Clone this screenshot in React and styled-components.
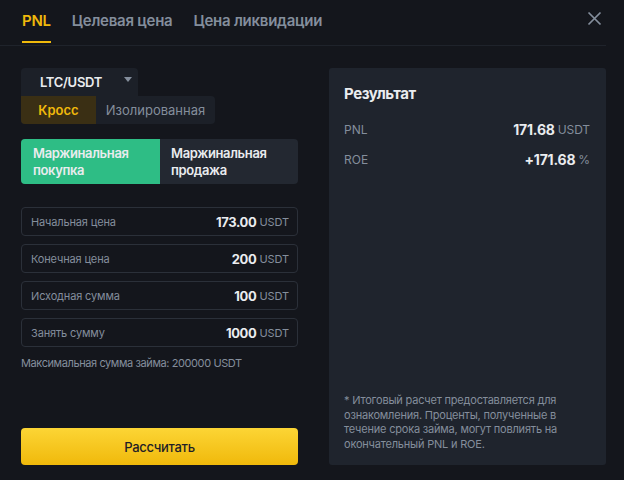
import React from 'react';
import styled, { createGlobalStyle } from 'styled-components';

const GlobalStyle = createGlobalStyle`
  html, body {
    margin: 0;
    padding: 0;
    background: #14161c;
  }

  * {
    box-sizing: border-box;
  }
`;

const Modal = styled.div`
  width: 624px;
  height: 480px;
  display: flex;
  flex-direction: column;
  background: #14161c;
  color: #eaecef;
  font-family: Inter, 'Noto Sans', sans-serif;
`;

const Head = styled.header`
  display: flex;
  align-items: stretch;
  height: 46px;
  margin-right: 18px;
  padding-left: 22px;
  border-bottom: 1px solid #1f232b;
`;

const Tabs = styled.nav`
  display: flex;
  gap: 21px;
`;

const Tab = styled.div`
  position: relative;
  display: flex;
  align-items: center;
  padding-bottom: 5px;
  font-size: 15px;
  font-weight: 600;
  letter-spacing: -0.25px;
  color: ${({ $active }) => ($active ? '#f0b90b' : '#848e9c')};

  &::after {
    content: '';
    display: ${({ $active }) => ($active ? 'block' : 'none')};
    position: absolute;
    left: 0;
    right: 0;
    bottom: 2px;
    height: 2px;
    background: #f0b90b;
  }
`;

const Close = styled.button`
  margin-left: auto;
  margin-right: 3px;
  align-self: flex-start;
  margin-top: 10px;
  padding: 0;
  width: 17px;
  height: 17px;
  border: 0;
  background: none;
  color: #848e9c;
  display: flex;
  align-items: center;
  justify-content: center;
`;

const Body = styled.div`
  flex: 1;
  display: grid;
  grid-template-columns: 277px 277px;
  column-gap: 31px;
  padding: 22px 18px 15px 21px;
`;

const LeftCol = styled.div`
  display: flex;
  flex-direction: column;
`;

const PairSelect = styled.div`
  width: 117px;
  height: 28px;
  display: flex;
  align-items: center;
  padding-left: 19px;
  background: #1c2028;
  border-radius: 4px 4px 0 0;
  font-size: 13px;
  font-weight: 600;
  letter-spacing: -0.3px;
  color: #eaecef;

  svg {
    margin-left: 22px;
    margin-top: -6px;
  }
`;

const Segmented = styled.div`
  width: 194px;
  height: 28px;
  display: flex;
  background: #1c2028;
  border-radius: 0 4px 4px 4px;
  overflow: hidden;
`;

const Segment = styled.div`
  display: flex;
  align-items: center;
  justify-content: center;
  width: ${({ $w }) => $w}px;
  font-size: 13px;
  font-weight: ${({ $active }) => ($active ? 600 : 400)};
  color: ${({ $active }) => ($active ? '#f0b90b' : '#848e9c')};
  background: ${({ $active }) => ($active ? '#3a2f14' : 'transparent')};
`;

const SideSwitch = styled.div`
  margin-top: 15px;
  height: 45px;
  display: grid;
  grid-template-columns: 139px 1fr;
  border-radius: 4px;
  overflow: hidden;
  background: #232831;
`;

const Side = styled.div`
  display: flex;
  align-items: center;
  padding-left: ${({ $buy }) => ($buy ? 12 : 11)}px;
  font-size: 13px;
  font-weight: 600;
  letter-spacing: -0.35px;
  line-height: 17px;
  color: #eaecef;
  background: ${({ $buy }) => ($buy ? '#2ebd85' : 'transparent')};
`;

const Fields = styled.div`
  margin-top: 23px;
  display: flex;
  flex-direction: column;
  gap: 8px;
`;

const Field = styled.div`
  height: 29px;
  display: flex;
  align-items: center;
  padding: 0 8px 0 9px;
  border: 1px solid #2b3039;
  border-radius: 4px;
`;

const FieldLabel = styled.span`
  font-size: 11px;
  letter-spacing: -0.15px;
  color: #848e9c;
`;

const FieldValue = styled.span`
  margin-left: auto;
  font-size: 13px;
  font-weight: 700;
  letter-spacing: -0.35px;
  color: #eaecef;
`;

const Unit = styled.span`
  margin-left: 3px;
  font-size: ${({ $size }) => $size || 11}px;
  font-weight: 400;
  letter-spacing: -0.1px;
  color: #848e9c;
`;

const Hint = styled.div`
  margin-top: 9px;
  font-size: 11px;
  letter-spacing: -0.4px;
  color: #848e9c;
`;

const Submit = styled.button`
  margin-top: auto;
  height: 37px;
  border: 0;
  border-radius: 4px;
  background: linear-gradient(180deg, #fcd535 0%, #f0b90b 100%);
  color: #1e2026;
  font-family: inherit;
  font-size: 13px;
  font-weight: 500;
  letter-spacing: -0.3px;
`;

const Result = styled.section`
  display: flex;
  flex-direction: column;
  padding: 16px 16px 14px 15px;
  background: #1f242d;
  border-radius: 3px;
`;

const ResultTitle = styled.h3`
  margin: 0 0 16px;
  font-size: 15px;
  font-weight: 700;
  letter-spacing: -0.45px;
  line-height: 20px;
  color: #eaecef;
`;

const Row = styled.div`
  display: flex;
  align-items: center;
  height: 18px;
  margin-bottom: 12px;
`;

const RowLabel = styled.span`
  font-size: 12px;
  color: #848e9c;
`;

const RowValue = styled.span`
  margin-left: auto;
  font-size: 14px;
  font-weight: 700;
  letter-spacing: -0.2px;
  color: #eaecef;
`;

const Note = styled.p`
  margin: auto 0 0;
  font-size: 11px;
  letter-spacing: -0.2px;
  line-height: 14.5px;
  color: #848e9c;
`;

const fields = [
  { label: 'Начальная цена', value: '173.00' },
  { label: 'Конечная цена', value: '200' },
  { label: 'Исходная сумма', value: '100' },
  { label: 'Занять сумму', value: '1000' },
];

const App = () => {
  return (
    <>
      <GlobalStyle />
      <Modal>
        <Head>
          <Tabs>
            <Tab $active>PNL</Tab>
            <Tab>Целевая цена</Tab>
            <Tab>Цена ликвидации</Tab>
          </Tabs>
          <Close aria-label='Закрыть'>
            <svg width='15' height='15' viewBox='0 0 15 15'>
              <path d='M1.5 1.5l12 12M13.5 1.5l-12 12' stroke='currentColor' strokeWidth='1.7' />
            </svg>
          </Close>
        </Head>
        <Body>
          <LeftCol>
            <PairSelect>
              LTC/USDT
              <svg width='8' height='5' viewBox='0 0 8 5'>
                <path d='M0 0h8L4 5z' fill='#848e9c' />
              </svg>
            </PairSelect>
            <Segmented>
              <Segment $active $w={75}>Кросс</Segment>
              <Segment $w={119}>Изолированная</Segment>
            </Segmented>
            <SideSwitch>
              <Side $buy>Маржинальная<br />покупка</Side>
              <Side>Маржинальная<br />продажа</Side>
            </SideSwitch>
            <Fields>
              {fields.map(f => (
                <Field key={f.label}>
                  <FieldLabel>{f.label}</FieldLabel>
                  <FieldValue>{f.value}</FieldValue>
                  <Unit>USDT</Unit>
                </Field>
              ))}
            </Fields>
            <Hint>Максимальная сумма займа: 200000 USDT</Hint>
            <Submit>Рассчитать</Submit>
          </LeftCol>
          <Result>
            <ResultTitle>Результат</ResultTitle>
            <Row>
              <RowLabel>PNL</RowLabel>
              <RowValue>171.68</RowValue>
              <Unit $size={12}>USDT</Unit>
            </Row>
            <Row>
              <RowLabel>ROE</RowLabel>
              <RowValue>+171.68</RowValue>
              <Unit $size={12}>%</Unit>
            </Row>
            <Note>
              * Итоговый расчет предоставляется для ознакомления. Проценты, полученные в
              течение срока займа, могут повлиять на окончательный PNL и ROE.
            </Note>
          </Result>
        </Body>
      </Modal>
    </>
  );
};

export default App;
